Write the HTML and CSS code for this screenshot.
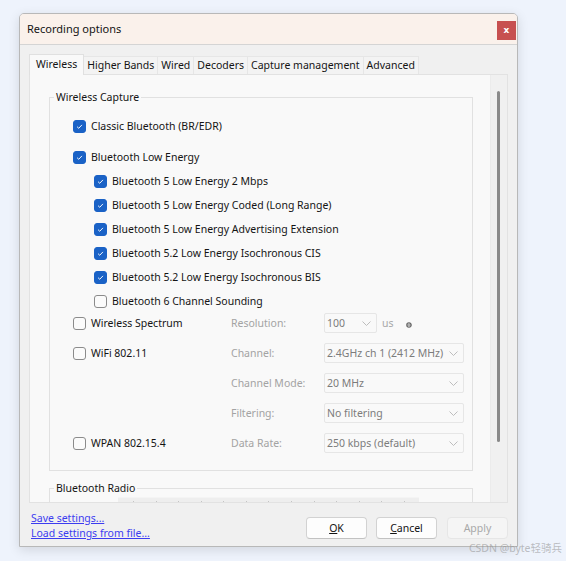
FILE: index.html
```html
<!DOCTYPE html>
<html>
<head>
<meta charset="utf-8">
<title>Recording options</title>
<link rel="stylesheet" href="styles.css">
</head>
<body>
<div class="dialog">
  <div class="titlebar">
    <span class="title">Recording options</span>
    <button class="close">x</button>
  </div>
  <div class="body">
    <div class="tabs">
      <div class="tab active">Wireless</div>
      <div class="tab">Higher Bands</div>
      <div class="tab">Wired</div>
      <div class="tab">Decoders</div>
      <div class="tab">Capture management</div>
      <div class="tab">Advanced</div>
    </div>
    <div class="panel">
      <div class="scroll">
        <fieldset class="group">
          <legend>Wireless Capture</legend>
          <div class="gbody">
            <div class="row first"><span class="cb on"><svg viewBox="0 0 13 13"><path d="M3.6 6.7 L5.6 8.6 L9.4 4.6"/></svg></span>Classic Bluetooth (BR/EDR)</div>
            <div class="row"><span class="cb on"><svg viewBox="0 0 13 13"><path d="M3.6 6.7 L5.6 8.6 L9.4 4.6"/></svg></span>Bluetooth Low Energy</div>
            <div class="row sub"><span class="cb on"><svg viewBox="0 0 13 13"><path d="M3.6 6.7 L5.6 8.6 L9.4 4.6"/></svg></span>Bluetooth 5 Low Energy 2 Mbps</div>
            <div class="row sub"><span class="cb on"><svg viewBox="0 0 13 13"><path d="M3.6 6.7 L5.6 8.6 L9.4 4.6"/></svg></span>Bluetooth 5 Low Energy Coded (Long Range)</div>
            <div class="row sub"><span class="cb on"><svg viewBox="0 0 13 13"><path d="M3.6 6.7 L5.6 8.6 L9.4 4.6"/></svg></span>Bluetooth 5 Low Energy Advertising Extension</div>
            <div class="row sub"><span class="cb on"><svg viewBox="0 0 13 13"><path d="M3.6 6.7 L5.6 8.6 L9.4 4.6"/></svg></span>Bluetooth 5.2 Low Energy Isochronous CIS</div>
            <div class="row sub"><span class="cb on"><svg viewBox="0 0 13 13"><path d="M3.6 6.7 L5.6 8.6 L9.4 4.6"/></svg></span>Bluetooth 5.2 Low Energy Isochronous BIS</div>
            <div class="row sub"><span class="cb"></span>Bluetooth 6 Channel Sounding</div>
            <div class="grid">
              <div class="cell"><span class="cb"></span>Wireless Spectrum</div>
              <div class="cell dim">Resolution:</div>
              <div class="cell">
                <div class="combo small"><span class="val">100</span><svg class="chev" viewBox="0 0 9 5"><path d="M0.5 0.5 L4.5 4.5 L8.5 0.5"/></svg></div>
                <span class="unit">us</span>
                <svg class="info" viewBox="0 0 6 6"><circle cx="3" cy="3" r="2.2"/><path d="M1 3 H5"/></svg>
              </div>

              <div class="cell"><span class="cb"></span>WiFi 802.11</div>
              <div class="cell dim">Channel:</div>
              <div class="cell"><div class="combo"><span class="val">2.4GHz ch 1 (2412 MHz)</span><svg class="chev" viewBox="0 0 9 5"><path d="M0.5 0.5 L4.5 4.5 L8.5 0.5"/></svg></div></div>

              <div class="cell"></div>
              <div class="cell dim">Channel Mode:</div>
              <div class="cell"><div class="combo"><span class="val">20 MHz</span><svg class="chev" viewBox="0 0 9 5"><path d="M0.5 0.5 L4.5 4.5 L8.5 0.5"/></svg></div></div>

              <div class="cell"></div>
              <div class="cell dim">Filtering:</div>
              <div class="cell"><div class="combo"><span class="val">No filtering</span><svg class="chev" viewBox="0 0 9 5"><path d="M0.5 0.5 L4.5 4.5 L8.5 0.5"/></svg></div></div>

              <div class="cell"><span class="cb"></span>WPAN 802.15.4</div>
              <div class="cell dim">Data Rate:</div>
              <div class="cell"><div class="combo"><span class="val">250 kbps (default)</span><svg class="chev" viewBox="0 0 9 5"><path d="M0.5 0.5 L4.5 4.5 L8.5 0.5"/></svg></div></div>
            </div>
          </div>
        </fieldset>
        <fieldset class="group radio">
          <legend>Bluetooth Radio</legend>
          <div class="gbody">
            <div class="slider">
              <i></i><i></i><i></i><i></i><i></i><i></i><i></i><i></i><i></i><i></i><i></i><i></i><i></i>
            </div>
          </div>
        </fieldset>
      </div>
      <div class="scrollbar"><div class="thumb"></div></div>
    </div>
    <div class="footer">
      <div class="links">
        <a href="#">Save settings...</a>
        <a href="#">Load settings from file...</a>
      </div>
      <div class="buttons">
        <button class="btn ok"><u>O</u>K</button>
        <button class="btn cancel"><u>C</u>ancel</button>
        <button class="btn apply" disabled>Apply</button>
      </div>
    </div>
  </div>
</div>
<div class="watermark">CSDN @byte轻骑兵</div>
</body>
</html>
```
FILE: styles.css
```css
* { box-sizing: border-box; }

html, body {
  margin: 0;
}

body {
  position: relative;
  width: 566px;
  height: 561px;
  overflow: hidden;
  padding: 13px 0 0 19px;
  background: #eef3fc;
  font-family: "Noto Sans", "Noto Sans CJK SC", sans-serif;
  font-size: 10.5px;
  color: #141414;
}

.dialog {
  width: 499px;
  height: 534px;
  border: 1px solid #b8b8b8;
  border-radius: 5px 5px 0 0;
  background: #f0f0f0;
  box-shadow: 0 3px 12px rgba(0, 0, 0, 0.12);
  display: flex;
  flex-direction: column;
  overflow: hidden;
}

.titlebar {
  flex: none;
  height: 31px;
  background: #faf1eb;
  border-bottom: 1px solid #d4d4d4;
  display: flex;
  justify-content: space-between;
  align-items: flex-start;
  padding: 0 1px 0 7px;
}

.title {
  line-height: 30px;
  font-size: 11px;
  color: #141414;
}

.close {
  margin-top: 7px;
  width: 19px;
  height: 19px;
  border: none;
  padding: 0;
  background: #c75050;
  color: #fff;
  font-family: "DejaVu Sans", sans-serif;
  font-weight: bold;
  font-size: 9px;
  line-height: 19px;
}

.body {
  flex: 1;
  display: flex;
  flex-direction: column;
  padding: 9px 9px 0 9px;
}

.tabs {
  flex: none;
  height: 20px;
  display: flex;
  align-items: flex-end;
}

.tab {
  height: 18px;
  line-height: 17px;
  padding: 0 3px 0 3px;
  border: 1px solid #e6e6e6;
  border-bottom: none;
  border-left: none;
  background: #f3f3f3;
  color: #141414;
  white-space: nowrap;
}

.tab.active {
  height: 21px;
  margin-bottom: -1px;
  line-height: 18px;
  padding: 0 6px 0 6px;
  border-left: 1px solid #e0e0e0;
  border-color: #e0e0e0;
  background: #f9f9f9;
  position: relative;
  z-index: 1;
}

.panel {
  flex: none;
  height: 429px;
  border: 1px solid #e2e2e2;
  background: #f9f9f9;
  display: flex;
}

.scroll {
  flex: 1;
  overflow: hidden;
  padding: 14px 0 0 19px;
}

.group {
  width: 424px;
  margin: 0;
  padding: 0 0 0 4px;
  border: 1px solid #e1e1e1;
  min-width: 0;
}

.group legend {
  padding: 0 2px;
  line-height: 16px;
  color: #141414;
}

.gbody {
  padding: 9px 8px 17px 19px;
}

.row {
  display: flex;
  align-items: center;
  height: 24px;
  gap: 5px;
  white-space: nowrap;
}

.row.first {
  margin-bottom: 7px;
}

.row.sub {
  padding-left: 21px;
}

.cb {
  flex: none;
  width: 13px;
  height: 13px;
  border: 1px solid #8b8b8b;
  border-radius: 3px;
  background: #fbfbfb;
  display: inline-flex;
}

.cb.on {
  border-color: #1a62c6;
  background: #1a62c6;
}

.cb svg {
  width: 11px;
  height: 11px;
}

.cb svg path {
  fill: none;
  stroke: #fff;
  stroke-width: 1.1;
}

.grid {
  display: grid;
  grid-template-columns: 158px 93px 140px;
  grid-auto-rows: 20px;
  row-gap: 10px;
}

.cell {
  display: flex;
  align-items: center;
  gap: 5px;
  white-space: nowrap;
}

.cell.dim {
  color: #a3a3a3;
}

.combo {
  width: 140px;
  height: 20px;
  border: 1px solid #e6e6e6;
  border-radius: 2px;
  background: #f9f9f9;
  display: flex;
  align-items: center;
  justify-content: space-between;
  padding: 0 5px 0 2px;
  color: #7c7c7c;
  overflow: hidden;
}

.combo.small {
  width: 53px;
}

.combo .val {
  white-space: nowrap;
  flex: 1;
  min-width: 0;
}

.chev {
  flex: none;
  width: 9px;
  height: 5px;
  margin-left: 3px;
}

.chev path {
  fill: none;
  stroke: #bdbdbd;
  stroke-width: 1;
}

.unit {
  color: #a8a8a8;
  margin-left: 0;
}

.info {
  width: 6px;
  height: 6px;
  margin-left: 7px;
  margin-top: 4px;
}

.info circle {
  fill: none;
  stroke: #666;
  stroke-width: 1.2;
}

.info path {
  stroke: #666;
  stroke-width: 1;
}

.group.radio {
  margin-top: 9px;
}

.group.radio .gbody {
  padding: 1px 0 0 64px;
}

.slider {
  width: 301px;
  height: 12px;
  background: #eeeeee;
  border-top: 1px solid #f4f4f4;
  display: flex;
  justify-content: space-between;
  align-items: flex-start;
  padding: 3px 14px 0 15px;
}

.slider i {
  display: block;
  width: 1px;
  height: 2px;
  background: #c4c4c4;
}

.scrollbar {
  flex: none;
  width: 17px;
  background: #f0f0f0;
  border-left: 1px solid #ebebeb;
  padding: 16px 0 0 6px;
}

.thumb {
  width: 3px;
  height: 351px;
  background: #8a8a8a;
  border-radius: 1.5px;
}

.footer {
  flex: 1;
  display: flex;
  justify-content: space-between;
  align-items: flex-start;
  padding-left: 2px;
}

.links {
  padding-top: 8px;
  display: flex;
  flex-direction: column;
}

.links a {
  line-height: 15px;
  color: #3c3cf0;
  text-decoration: underline;
}

.buttons {
  display: flex;
  margin-top: 14px;
}

.btn {
  width: 61px;
  height: 22px;
  padding: 0;
  border: 1px solid #d2d2d2;
  border-bottom-color: #c2c2c2;
  border-radius: 4px;
  background: #fdfdfd;
  font-family: "Noto Sans", sans-serif;
  font-size: 10.5px;
  color: #141414;
}

.btn.ok {
  margin-right: 9px;
}

.btn.cancel {
  margin-right: 10px;
}

.btn.apply {
  background: #f5f5f5;
  border-color: #e6e6e6;
  color: #a9a9a9;
}

.watermark {
  position: absolute;
  right: 4px;
  top: 540px;
  font-size: 10.5px;
  line-height: 16px;
  color: rgba(140, 140, 140, 0.55);
}
```
